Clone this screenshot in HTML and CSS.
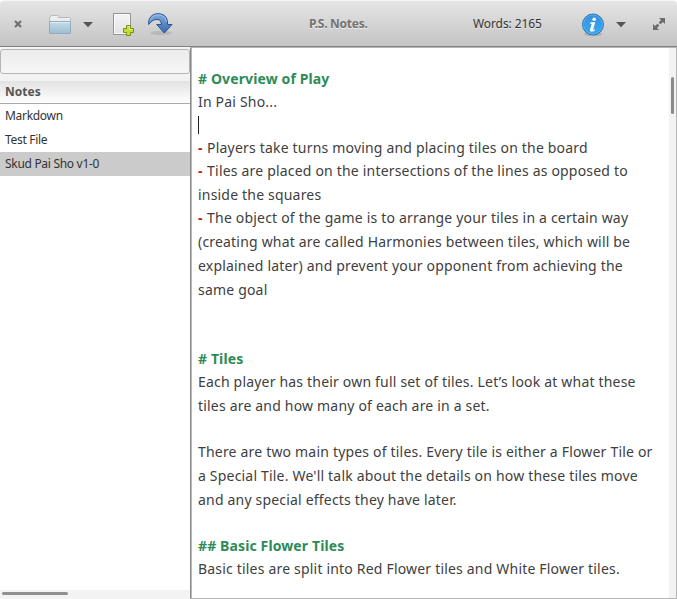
FILE: index.html
```html
<!DOCTYPE html>
<html lang="en">
<head>
<meta charset="utf-8">
<title>P.S. Notes.</title>
<link rel="stylesheet" href="styles.css">
</head>
<body>
<div class="window">
  <header class="toolbar">
    <svg class="close" width="8" height="8" viewBox="0 0 8 8"><path d="M1 1l6 6M7 1l-6 6" stroke="#6c6c6c" stroke-width="2"/></svg>
    <svg class="folder" width="22" height="20" viewBox="0 0 22 20">
      <defs><linearGradient id="fold" x2="0" y2="1"><stop stop-color="#c8dce7"/><stop offset="1" stop-color="#9bbdd2"/></linearGradient></defs>
      <path d="M.5 18V3q0-1 1-1V1.500q0-1 1-1h6q1 0 1 1v1H20.500q1 0 1 1V18z" fill="#ededed" stroke="#b9b9b9"/>
      <path d="M.5 6.500h21V18.500H.5z" fill="url(#fold)" stroke="#8eadc0"/>
      <path d="M1.500 7.500h19" stroke="#dceaf1"/>
    </svg>
    <svg class="arrow arrow-open" width="10" height="6" viewBox="0 0 10 6"><path d="M0 0h10L5 5.300z" fill="#555"/></svg>
    <svg class="new" width="22" height="24" viewBox="0 0 22 24">
      <defs><linearGradient id="page" x2="0" y2="1"><stop stop-color="#f5f5f5"/><stop offset="1" stop-color="#e2e2e2"/></linearGradient></defs>
      <path d="M.5.500h17v21H.5z" fill="url(#page)" stroke="#939393"/>
      <path d="M1.500 1.500h15v19h-15z" fill="none" stroke="#fafafa"/>
      <path d="M13.500 12.500h4v3h3v4h-3v3h-4v-3h-3v-4h3z" fill="#c0dc38" stroke="#799018"/>
      <path d="M14.500 13.500h2v3h3" fill="none" stroke="#e3f289"/>
    </svg>
    <svg class="redo" width="25" height="23" viewBox="0 0 25 23">
      <defs><linearGradient id="blue" x2="0" y2="1"><stop stop-color="#84afdc"/><stop offset="1" stop-color="#3569b0"/></linearGradient></defs>
      <ellipse cx="13" cy="20" rx="11" ry="2.200" fill="#aaa" opacity=".6"/>
      <path d="M.7 11.500C0 5 4 .7 10 .7C16 .7 19.500 4 19.500 10V11.500H24L16.300 20L8.700 11.500H13.300C13.300 8 12 6.500 9 6.500C5.500 6.500 3.500 8 .7 11.500Z" fill="url(#blue)" stroke="#2a5295" stroke-width="1"/>
      <path d="M2 8C3 4 6 1.900 10 1.900C15 1.900 18 4.500 18.300 9" fill="none" stroke="#a9c9e9" stroke-width=".8"/>
    </svg>
    <h1 class="title">P.S. Notes.</h1>
    <span class="count">Words: 2165</span>
    <svg class="info" width="24" height="24" viewBox="0 0 24 24">
      <defs><linearGradient id="inf" x2="0" y2="1"><stop stop-color="#388fdc"/><stop offset="1" stop-color="#35aaf5"/></linearGradient></defs>
      <ellipse cx="12" cy="21" rx="9" ry="2.300" fill="#999" opacity=".5"/>
      <circle cx="12" cy="11.500" r="10.500" fill="url(#inf)" stroke="#2c73ac"/>
      <circle cx="12" cy="11.500" r="9.500" fill="none" stroke="#62b2ea" stroke-width=".8"/>
      <circle cx="13.200" cy="6.200" r="1.800" fill="#fff"/>
      <path d="M9.300 9.300h4.900l-2 6.900q-.2.800.4.800l1.300-.8l.3.700q-1.800 2-3.900 1.700q-1.700-.3-1.300-2.100l1.600-5.300q.2-.8-1.500-.8z" fill="#fff"/>
    </svg>
    <svg class="arrow arrow-info" width="10" height="6" viewBox="0 0 10 6"><path d="M0 0h10L5 5.300z" fill="#555"/></svg>
    <svg class="expand" width="12" height="12" viewBox="0 0 12 12"><path d="M6 0h6v6L10 4L7.500 6.300L5.700 4.500L8 2zM0 6l2 2L4.500 5.700L6.300 7.500L4 10L6 12H0z" fill="#6c6c6c"/></svg>
  </header>
  <div class="panes">
    <aside class="sidebar">
      <input class="search" type="text" aria-label="Search">
      <h2 class="heading">Notes</h2>
      <ul class="notes">
        <li>Markdown</li>
        <li>Test File</li>
        <li class="selected">Skud Pai Sho v1-0</li>
      </ul>
      <div class="hscroll"><div class="hthumb"></div></div>
    </aside>
    <main class="editor">
      <div class="text">
        <p class="head"># Overview of Play</p>
        <p>In Pai Sho...</p>
        <p class="blank"><span class="caret"></span></p>
        <p><b>-</b> Players take turns moving and placing tiles on the board</p>
        <p><b>-</b> Tiles are placed on the intersections of the lines as opposed to<br>inside the squares</p>
        <p><b>-</b> The object of the game is to arrange your tiles in a certain way<br>(creating what are called Harmonies between tiles, which will be<br>explained later) and prevent your opponent from achieving the<br>same goal</p>
        <p class="blank"></p>
        <p class="blank"></p>
        <p class="head"># Tiles</p>
        <p>Each player has their own full set of tiles. Let’s look at what these<br>tiles are and how many of each are in a set.</p>
        <p class="blank"></p>
        <p>There are two main types of tiles. Every tile is either a Flower Tile or<br>a Special Tile. We'll talk about the details on how these tiles move<br>and any special effects they have later.</p>
        <p class="blank"></p>
        <p class="head">## Basic Flower Tiles</p>
        <p>Basic tiles are split into Red Flower tiles and White Flower tiles.</p>
      </div>
      <div class="vscroll"><div class="vthumb"></div></div>
    </main>
  </div>
</div>
</body>
</html>
```
FILE: styles.css
```css
* { box-sizing: border-box; }
body { margin: 0; background: #fff; font-family: "Noto Sans", "Open Sans", sans-serif; color: #333; }
h1, h2, p, ul { margin: 0; padding: 0; }
svg { display: block; flex: none; }
.window { width: 677px; height: 599px; display: flex; flex-direction: column; overflow: hidden; }
.toolbar {
  height: 47px; flex: none; display: flex; align-items: flex-start; padding-left: 14px;
  background: linear-gradient(#e5e5e5, #c4c4c4);
  border-top: 1px solid #f7f7f7; border-bottom: 1px solid #828282;
  border-radius: 4px 4px 0 0; white-space: nowrap;
}
.close { margin-top: 19px; }
.folder { margin: 14px 0 0 27px; }
.arrow { margin-top: 21px; }
.arrow-open { margin-left: 12px; }
.new { margin: 12px 0 0 20px; }
.redo { margin: 12px 0 0 13px; }
.title { width: 60px; margin: 14px 0 0 136px; font-size: 12px; line-height: 17px; color: #737373; text-shadow: 0 1px #eee; letter-spacing: -.25px; }
.count { width: 72px; margin: 14px 0 0 104px; font-size: 12px; line-height: 17px; text-shadow: 0 1px #e8e8e8; letter-spacing: -.1px; }
.info { margin: 12px 0 0 36px; }
.arrow-info { margin-left: 11px; }
.expand { margin: 17px 0 0 27px; }
.panes { flex: 1; display: flex; min-height: 0; }
.sidebar { width: 190px; display: flex; flex-direction: column; background: #f4f4f4; font-size: 12px; }
.search { width: 190px; height: 25px; flex: none; margin: 2px 0 0; padding: 3px; border: 1px solid #b5b5b5; border-radius: 3px; background: linear-gradient(#ececec, #f6f6f6); outline: none; }
.heading { height: 30px; flex: none; padding: 9px 5px 0; border-bottom: 1px solid #aaa; background: linear-gradient(#f2f2f2 0 7px, #e2e2e2 7px, #fff); font-size: 12px; line-height: 18px; color: #555; }
.notes { flex: 1; list-style: none; background: #fff; }
.notes li { height: 24px; padding-left: 5px; line-height: 23px; white-space: nowrap; letter-spacing: -.3px; }
.notes .selected { background: #cbcbcb; }
.hscroll { height: 9px; padding: 2px; background: #f3f3f3; }
.hthumb { width: 66px; height: 3px; border-radius: 2px; background: #919191; }
.editor { flex: 1; display: flex; border: 1px solid #b5b5b5; border-width: 1px 1px 1px 0; box-shadow: inset 1px 0 #8a8a8a, inset 2px 0 #b9b9b9; }
.text { flex: 1; padding: 19px 0 0 8px; font-size: 14px; line-height: 24px; white-space: nowrap; color: #404040; letter-spacing: .19px; }
.text p { margin-bottom: -1px; }
.text .head { font-weight: 700; color: #2e8b57; letter-spacing: .12px; }
.text b { color: #b22222; letter-spacing: .8px; }
.blank { height: 24px; padding-top: 3px; }
.caret { display: block; width: 1px; height: 18px; background: #222; }
.vscroll { width: 7px; padding: 29px 2px; background: #f3f3f3; }
.vthumb { width: 3px; height: 37px; border-radius: 2px; background: #8b8b8b; }
```
